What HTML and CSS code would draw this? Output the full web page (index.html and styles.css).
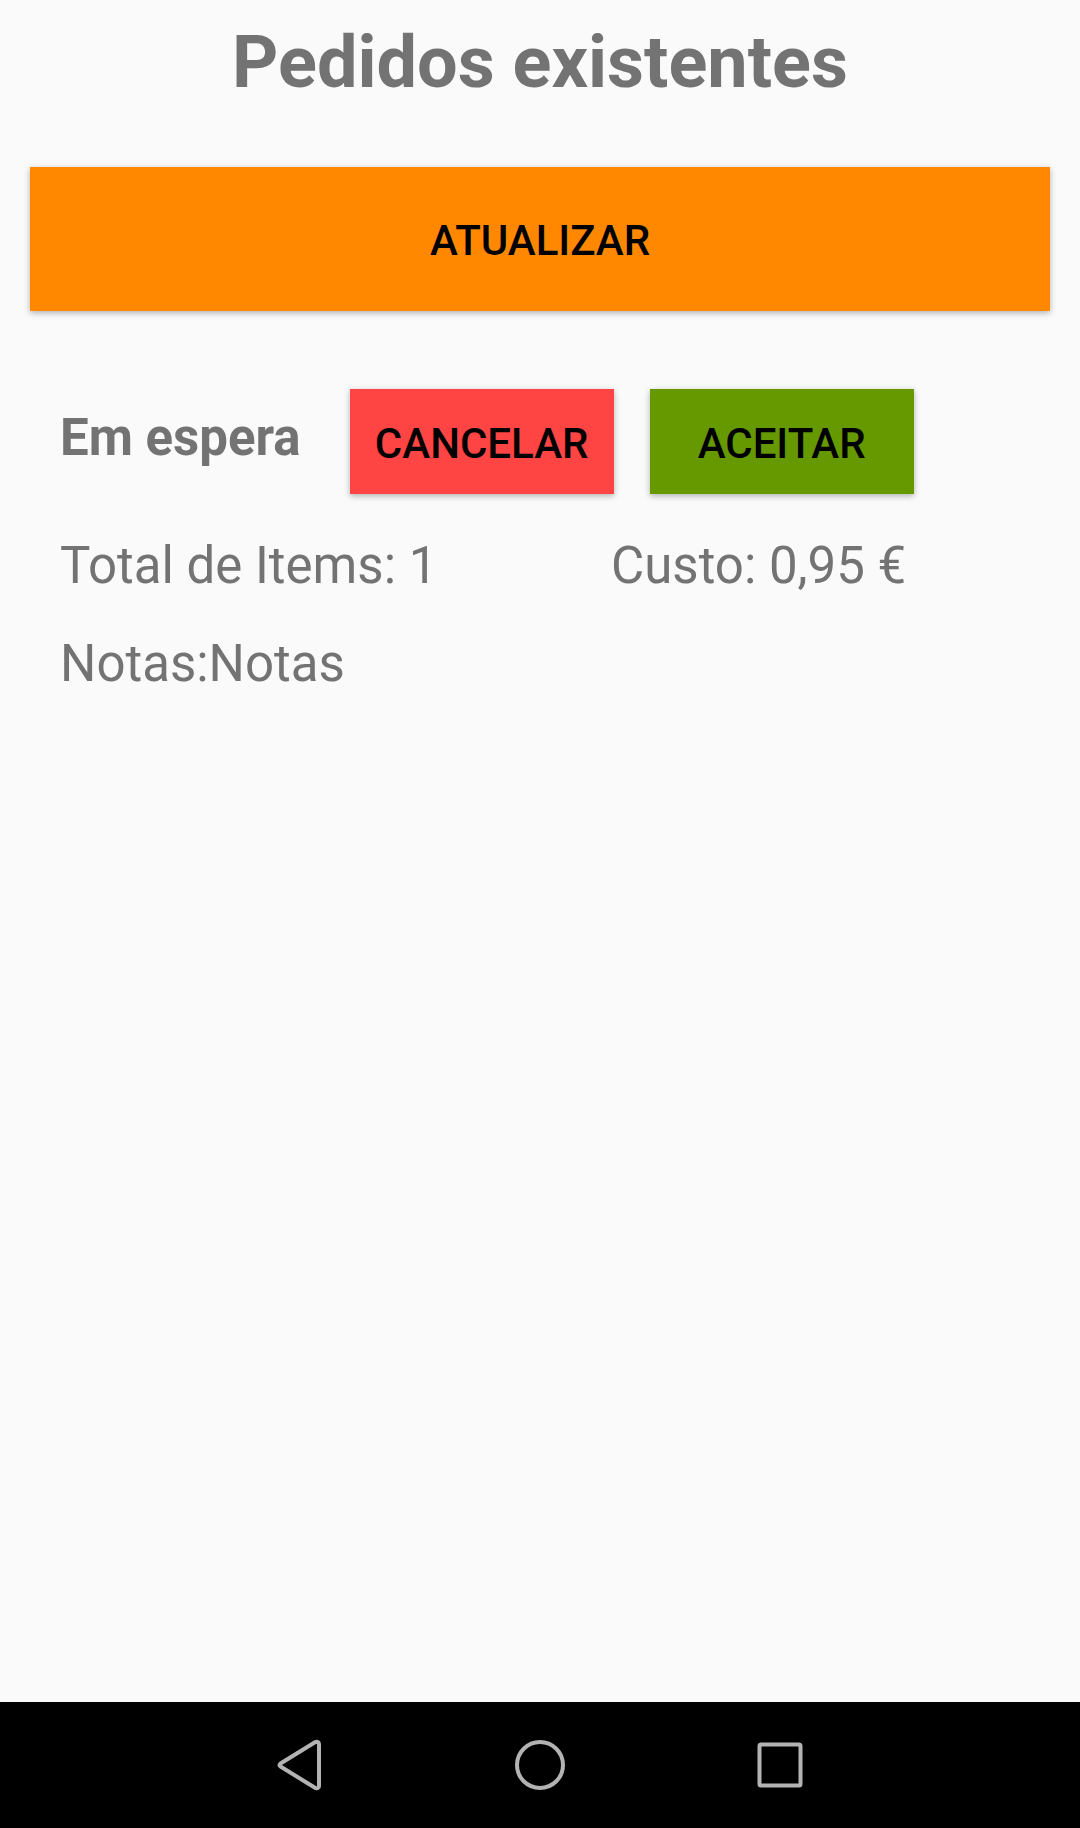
FILE: index.html
```
<!DOCTYPE html>
<html lang="pt">
<head>
  <meta charset="utf-8">
  <meta name="viewport" content="width=device-width, initial-scale=1">
  <title>Pedidos existentes</title>
  <link rel="stylesheet" href="styles.css">
</head>
<body>
  <main>
    <h1>Pedidos existentes</h1>
    <button type="button" class="btn refresh">ATUALIZAR</button>

    <section class="order">
      <div class="order-head">
        <h2 class="status">Em espera</h2>
        <div class="actions">
          <button type="button" class="btn cancel">CANCELAR</button>
          <button type="button" class="btn accept">ACEITAR</button>
        </div>
      </div>
      <div class="order-info">
        <span>Total de Items: 1</span>
        <span>Custo: 0,95 €</span>
      </div>
      <p class="notes">Notas:Notas</p>
    </section>
  </main>

  <nav class="navbar">
    <button type="button" aria-label="Voltar">
      <svg viewBox="0 0 56 56">
        <path d="M8.5 26.5 L43 5.2 Q47 3.8 47 7 L47 49 Q47 52.2 43 50.8 L8.5 29.5 Q6.5 28 8.5 26.5 Z"/>
      </svg>
    </button>
    <button type="button" aria-label="Início">
      <svg viewBox="0 0 56 56">
        <circle cx="28" cy="28" r="23"/>
      </svg>
    </button>
    <button type="button" aria-label="Recentes">
      <svg viewBox="0 0 56 56">
        <rect x="7.5" y="7.5" width="41" height="41" rx="1.5"/>
      </svg>
    </button>
  </nav>
</body>
</html>
```

FILE: styles.css
```
* {
  box-sizing: border-box;
}

body {
  margin: 0;
  min-height: 100vh;
  display: flex;
  flex-direction: column;
  background: #fafafa;
  color: #737373;
  font-family: Roboto, sans-serif;
  font-size: 51px;
  line-height: 60px;
}

main {
  flex: 1;
  padding: 21px 30px;
}

h1 {
  margin: 0 0 62px;
  font-size: 72px;
  line-height: 84px;
  text-align: center;
}

/* BUTTONS */
.btn {
  padding: 3px 0 0;
  border: none;
  color: #000;
  font-family: inherit;
  font-size: 42px;
  font-weight: 500;
  cursor: pointer;
  box-shadow: 0 2px 6px rgba(0, 0, 0, 0.3);
}

.refresh {
  display: block;
  width: 100%;
  height: 144px;
  background: #ff8800;
}

.cancel {
  background: #ff4444;
}

.accept {
  background: #669900;
}

/* ORDER */
.order {
  margin-top: 78px;
  padding: 0 30px;
}

.order-head {
  display: flex;
  gap: 49px;
}

.status {
  margin: 0;
  font-size: 51px;
  line-height: 98px;
}

.actions {
  display: flex;
  gap: 36px;
}

.actions .btn {
  width: 264px;
  height: 105px;
}

.order-info {
  display: grid;
  grid-template-columns: 551fr 409fr;
  margin-top: 42px;
}

.notes {
  margin: 38px 0 0;
}

/* BOTTOM BAR */
.navbar {
  display: flex;
  justify-content: center;
  background: #000;
}

.navbar button {
  display: flex;
  align-items: center;
  justify-content: center;
  width: 240px;
  height: 126px;
  padding: 0;
  border: none;
  background: none;
  cursor: pointer;
}

.navbar svg {
  width: 56px;
  height: 56px;
  fill: none;
  stroke: #b3b3b3;
  stroke-width: 4;
  stroke-linejoin: round;
}
```
